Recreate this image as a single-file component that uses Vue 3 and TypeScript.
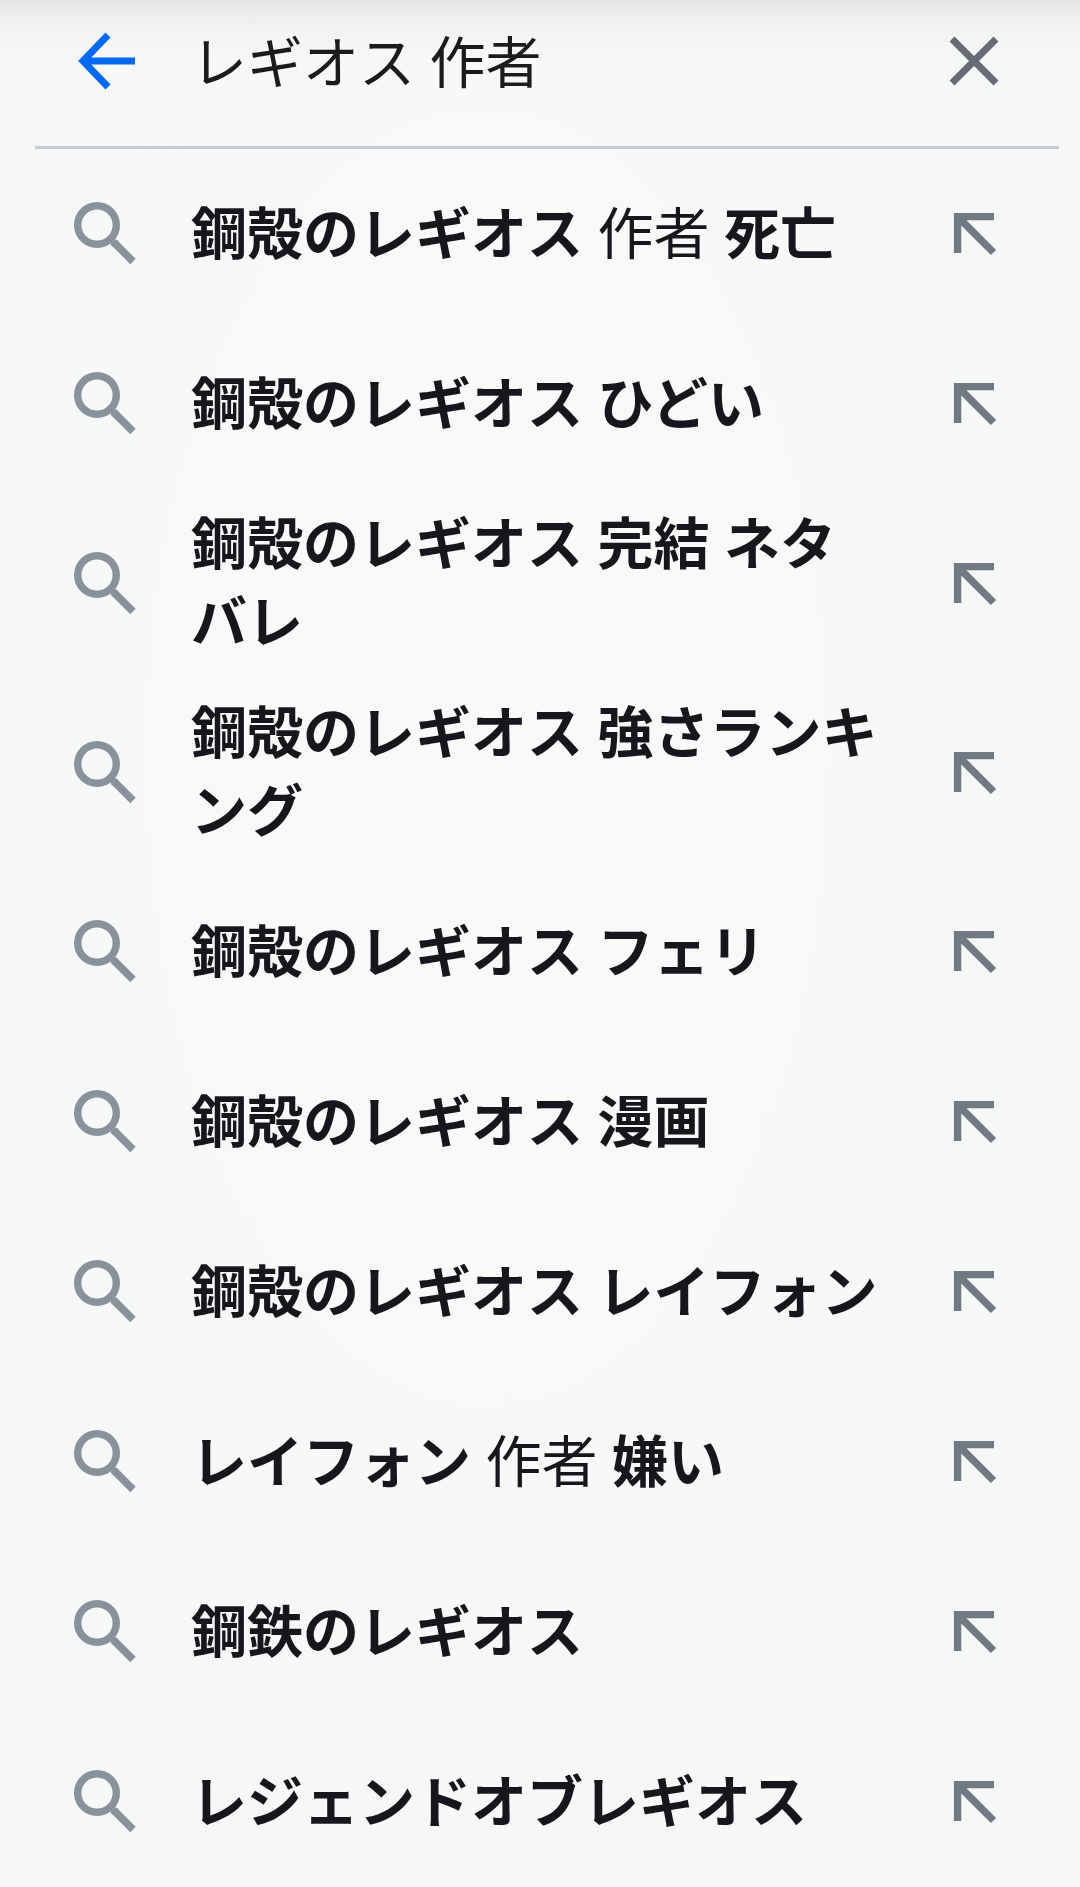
<script setup lang="ts">
import { ref } from 'vue'

interface Part {
  text: string
  typed?: boolean
}

const query = ref('レギオス 作者')

const suggestions: Part[][] = [
  [{ text: '鋼殻のレギオス ' }, { text: '作者', typed: true }, { text: ' 死亡' }],
  [{ text: '鋼殻のレギオス ひどい' }],
  [{ text: '鋼殻のレギオス 完結 ネタバレ' }],
  [{ text: '鋼殻のレギオス 強さランキング' }],
  [{ text: '鋼殻のレギオス フェリ' }],
  [{ text: '鋼殻のレギオス 漫画' }],
  [{ text: '鋼殻のレギオス レイフォン' }],
  [{ text: 'レイフォン ' }, { text: '作者', typed: true }, { text: ' 嫌い' }],
  [{ text: '鋼鉄のレギオス' }],
  [{ text: 'レジェンドオブレギオス' }],
]

const plain = (parts: Part[]): string => parts.map((p) => p.text).join('')

function insert(parts: Part[]) {
  query.value = plain(parts)
}
</script>

<template>
  <main class="page" lang="ja">
    <form class="bar" role="search" @submit.prevent>
      <button class="icon-button back" type="button" aria-label="戻る">
        <svg width="58" height="58" viewBox="0 0 58 58" fill="none" stroke="#0568f0" stroke-width="7">
          <path d="M57 29H5M30 3L5 29L30 55" />
        </svg>
      </button>
      <input v-model="query" class="query" type="text" aria-label="検索" />
      <button class="icon-button clear" type="button" aria-label="消去" @click="query = ''">
        <svg width="50" height="50" viewBox="0 0 50 50" fill="none" stroke="#666c75" stroke-width="7">
          <path d="M3 3L47 47M47 3L3 47" />
        </svg>
      </button>
    </form>

    <ul class="list">
      <li v-for="(parts, i) in suggestions" :key="i" class="row">
        <a class="link" href="#">
          <svg class="glass" width="64" height="64" viewBox="0 0 64 64" fill="none" stroke="#89919b">
            <circle cx="24" cy="23" r="19.300" stroke-width="7.400" />
            <path d="M41 40.500L60 59.500" stroke-width="7.600" />
            <circle cx="41.500" cy="41" r="2.300" stroke-width="3" />
          </svg>
          <span class="text"><span v-for="(part, j) in parts" :key="j" :class="{ typed: part.typed }">{{ part.text }}</span></span>
        </a>
        <button class="icon-button insert" type="button" :aria-label="plain(parts) + ' を入力'" @click="insert(parts)">
          <svg width="44" height="44" viewBox="0 0 44 44" fill="none" stroke="#717983" stroke-width="7.400">
            <path d="M41 4.600H4.600V41M4.600 4.600L40.500 40.500" />
          </svg>
        </button>
      </li>
    </ul>
  </main>
</template>

<style>
body {
  margin: 0;
  background: #f6f8f8;
}
</style>

<style scoped>
.page {
  background:
    linear-gradient(#e5e5e5, #eeeeee 16px, #f4f4f4 36px, rgba(246, 248, 248, 0) 60px),
    radial-gradient(ellipse at 45% 40%, #f9f9f9, #f6f8f8 65%);
  color: #16171c;
  font-family: "Noto Sans", "Noto Sans CJK JP", sans-serif;
  font-size: 56px;
  line-height: 78px;
}

.bar {
  display: flex;
  align-items: center;
  height: 149px;
  margin: 0 21px 0 35px;
  padding-bottom: 24px;
  box-sizing: border-box;
  border-bottom: 3px solid #c8ccd2;
}

.icon-button {
  flex: none;
  display: flex;
  align-items: center;
  padding: 0;
  border: 0;
  background: none;
  cursor: pointer;
}

.back {
  margin-left: 43px;
}

.query {
  flex: 1;
  min-width: 0;
  height: 84px;
  margin-left: 55px;
  padding: 0 0 5px;
  border: 0;
  outline: 0;
  background: none;
  color: #1a1b1c;
  font: inherit;
}

.clear {
  margin-right: 60px;
}

.list {
  margin: 0;
  padding: 0;
  list-style: none;
}

.row {
  display: flex;
  align-items: stretch;
  min-height: 170px;
}

.link {
  flex: 1;
  min-width: 0;
  display: flex;
  align-items: center;
  gap: 54px;
  padding: 14px 0 14px 73px;
  color: inherit;
  text-decoration: none;
}

.glass {
  flex: none;
}

.text {
  flex: 1;
  min-width: 0;
  padding-bottom: 5px;
  font-weight: 700;
}

.typed {
  font-weight: 400;
}

.insert {
  padding: 0 83px 0 68px;
}
</style>
